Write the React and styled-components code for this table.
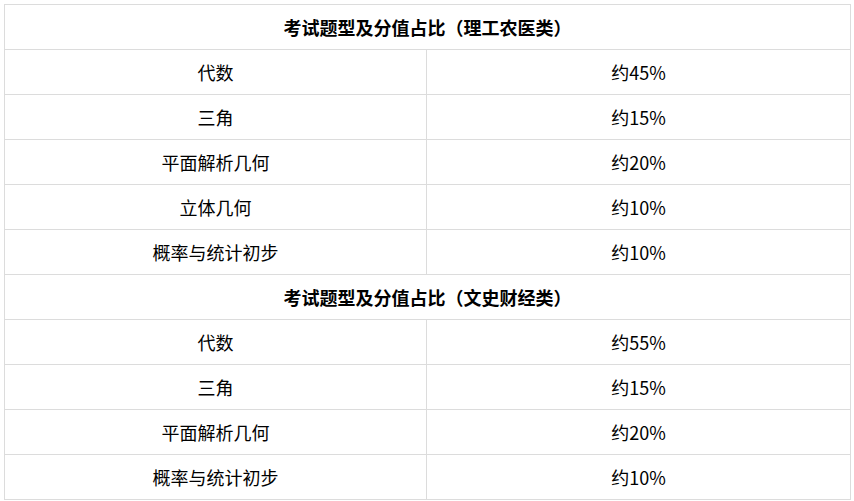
import styled, { createGlobalStyle } from "styled-components"

const sections = [
  {
    title: "考试题型及分值占比（理工农医类）",
    rows: [
      ["代数", "约45%"],
      ["三角", "约15%"],
      ["平面解析几何", "约20%"],
      ["立体几何", "约10%"],
      ["概率与统计初步", "约10%"],
    ],
  },
  {
    title: "考试题型及分值占比（文史财经类）",
    rows: [
      ["代数", "约55%"],
      ["三角", "约15%"],
      ["平面解析几何", "约20%"],
      ["概率与统计初步", "约10%"],
    ],
  },
]

export default function App() {
  return (
    <>
      <GlobalStyle />
      <Page>
        <Table>
          <colgroup>
            <Col w={422} />
            <Col w={424} />
          </colgroup>
          <tbody>
            {sections.map((s) => (
              <Section key={s.title} section={s} />
            ))}
          </tbody>
        </Table>
      </Page>
    </>
  )
}

function Section({ section }) {
  return (
    <>
      <Row>
        <Cell colSpan={2} head>
          {section.title}
        </Cell>
      </Row>
      {section.rows.map(([name, value], i) => (
        <Row key={i}>
          <Cell>{name}</Cell>
          <Cell>{value}</Cell>
        </Row>
      ))}
    </>
  )
}

const GlobalStyle = createGlobalStyle`
  body {
    margin: 0;
    background: white;
    font-family: "Noto Sans CJK SC", "Noto Sans", sans-serif;
    color: #000;
  }
`

const Page = styled.div`
  padding: 4px;
`

const Table = styled.table`
  width: 846px;
  border-collapse: collapse;
  table-layout: fixed;
`

const Col = styled.col`
  width: ${(p) => p.w}px;
`

const Row = styled.tr`
  height: 45px;
`

const Cell = styled.td`
  border: 1px solid #dcdcdc;
  padding: 0;
  text-align: center;
  vertical-align: middle;
  font-size: 18px;
  line-height: 24px;
  font-weight: ${(p) => (p.head ? 700 : 400)};
`
